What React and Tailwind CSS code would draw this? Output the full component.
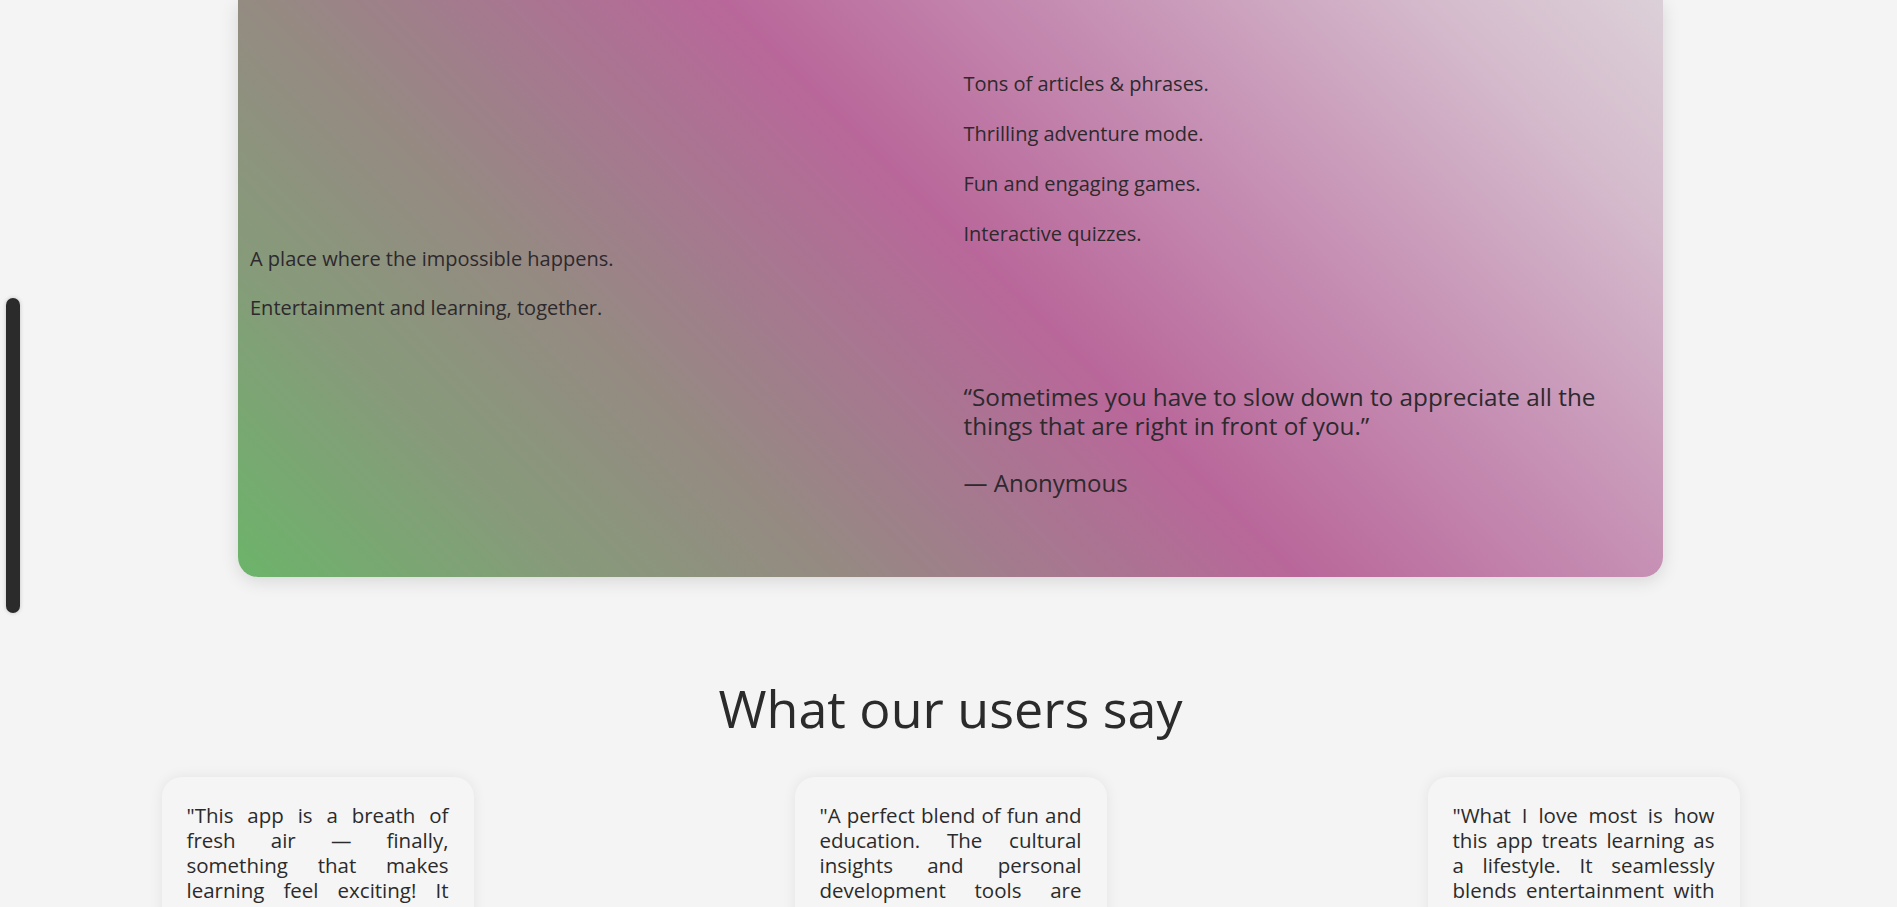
const testimonials = [
  '"This app is a breath of fresh air — finally, something that makes learning feel exciting! It never ceases to amaze me, every single day."',
  '"A perfect blend of fun and education. The cultural insights and personal development tools are awesome, even for a busy schedule."',
  '"What I love most is how this app treats learning as a lifestyle. It seamlessly blends entertainment with genuine, everyday growth."',
];

const features = [
  'Tons of articles & phrases.',
  'Thrilling adventure mode.',
  'Fun and engaging games.',
  'Interactive quizzes.',
];

const App = () => {
  return (
    <div className="min-h-screen overflow-hidden bg-[#f4f4f4] pl-1 font-['Open_Sans',sans-serif] text-[#2b2b2b]">
      {/* scroll progress */}
      <div className="fixed left-[6px] top-[298px] h-[315px] w-[14px] rounded-full bg-[#2b2b2b] shadow-[0_0_4px_rgba(0,0,0,0.2)]" />

      <section className="mx-auto grid h-[577px] w-[1425px] grid-cols-2 rounded-b-[20px] bg-[linear-gradient(45deg,#6cb46a_0%,#869b7a_16%,#958a82_30%,#a47a8e_40%,#b9679a_53%,#c690b4_71%,#d5bccd_89%,#dcd0d8_100%)] px-3 text-[#2d292d] shadow-[0_4px_18px_rgba(0,0,0,0.12)]">
        <div className="flex flex-col gap-[19px] pt-[244px] text-[20px] leading-[30px]">
          <p>A place where the impossible happens.</p>
          <p>Entertainment and learning, together.</p>
        </div>
        <div className="flex flex-col pl-[13px] pt-[69px]">
          <div className="flex flex-col gap-5 text-[20px] leading-[30px]">
            {features.map((f) => (
              <p key={f}>{f}</p>
            ))}
          </div>
          <p className="mt-[133px] text-[24.3px] leading-[29px]">
            “Sometimes you have to slow down to appreciate all the
            <br />
            things that are right in front of you.”
          </p>
          <p className="mt-[28px] text-[24px] leading-[30px]">— Anonymous</p>
        </div>
      </section>

      <section className="pt-[105px]">
        <h2 className="text-center text-[52px] leading-none">What our users say</h2>
        <div className="mt-[43px] flex justify-center gap-[321px]">
          {testimonials.map((t) => (
            <div
              key={t}
              className="w-[312px] shrink-0 rounded-[20px] bg-[#f5f5f5] px-[25px] pb-6 pt-[26px] shadow-[0_0_14px_rgba(0,0,0,0.07)]"
            >
              <p className="text-justify text-[20.5px] leading-[25px]">{t}</p>
            </div>
          ))}
        </div>
      </section>
    </div>
  );
};

export default App;
